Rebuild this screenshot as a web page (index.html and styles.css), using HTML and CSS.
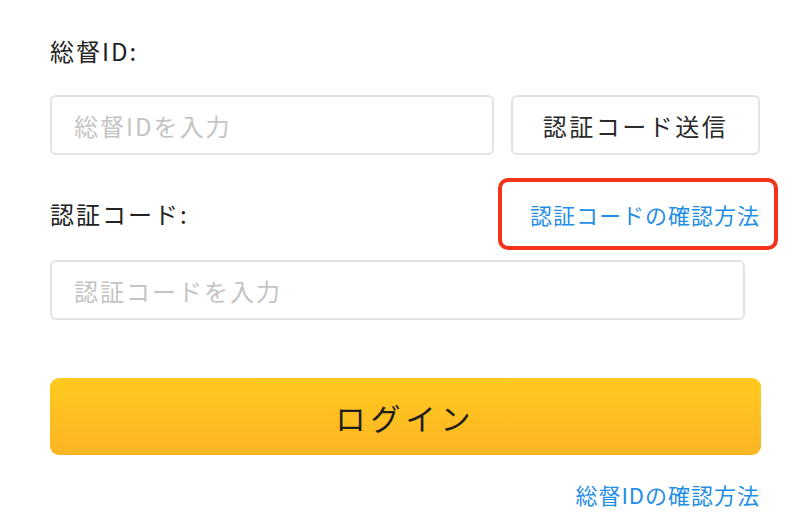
FILE: index.html
```html
<!DOCTYPE html>
<html lang="ja">
<head>
<meta charset="utf-8">
<link rel="stylesheet" href="styles.css">
</head>
<body>
<div class="form">
  <div class="label">総督ID:</div>
  <div class="row-id">
    <div class="input input-id"><span class="ph">総督IDを入力</span></div>
    <div class="send-btn">認証コード送信</div>
  </div>
  <div class="row-code">
    <div class="label">認証コード:</div>
    <div class="mark"><span class="link">認証コードの確認方法</span></div>
  </div>
  <div class="input input-code"><span class="ph">認証コードを入力</span></div>
  <div class="login">ログイン</div>
  <div class="bottom"><span class="link">総督IDの確認方法</span></div>
</div>
</body>
</html>
```
FILE: styles.css
```css
html, body {
  margin: 0;
  padding: 0;
  background: #ffffff;
}
body {
  font-family: "Noto Sans CJK JP", "Noto Sans", sans-serif;
  color: #222222;
}
.form {
  width: 711px;
  padding: 36px 0 0 50px;
  display: flex;
  flex-direction: column;
}
.label {
  font-size: 24px;
  line-height: 30px;
  height: 30px;
  letter-spacing: 2px;
  color: #222222;
}
.row-id {
  display: flex;
  gap: 17px;
  margin-top: 29px;
  width: 710px;
}
.input {
  box-sizing: border-box;
  height: 60px;
  border: 2px solid #e2e2e2;
  border-radius: 6px;
  display: flex;
  align-items: center;
  padding-left: 22px;
}
.input-id {
  width: 444px;
}
.input-code {
  width: 695px;
  margin-top: 10px;
}
.ph {
  font-size: 24px;
  letter-spacing: 2px;
  color: #c4c4c4;
}
.send-btn {
  box-sizing: border-box;
  width: 249px;
  height: 60px;
  border: 2px solid #e2e2e2;
  border-radius: 6px;
  display: flex;
  align-items: center;
  justify-content: center;
  font-size: 24px;
  letter-spacing: 2.5px;
  color: #2a2a2a;
}
.row-code {
  display: flex;
  justify-content: space-between;
  align-items: center;
  margin-top: 23px;
  margin-right: -17px;
}
.mark {
  box-sizing: border-box;
  width: 280px;
  height: 72px;
  border: 4px solid #f2341d;
  border-radius: 10px;
  display: flex;
  align-items: center;
  padding-left: 28px;
}
.link {
  font-size: 22px;
  letter-spacing: 1px;
  color: #1f8ee6;
  white-space: nowrap;
}
.login {
  margin-top: 58px;
  width: 711px;
  height: 77px;
  border-radius: 9px;
  background: linear-gradient(180deg, #ffcb1e 0%, #fdb424 100%);
  display: flex;
  align-items: center;
  justify-content: center;
  font-size: 30px;
  letter-spacing: 5px;
  color: #1e1e1e;
}
.bottom {
  margin-top: 24px;
  height: 30px;
  line-height: 30px;
  width: 710px;
  text-align: right;
}
```
